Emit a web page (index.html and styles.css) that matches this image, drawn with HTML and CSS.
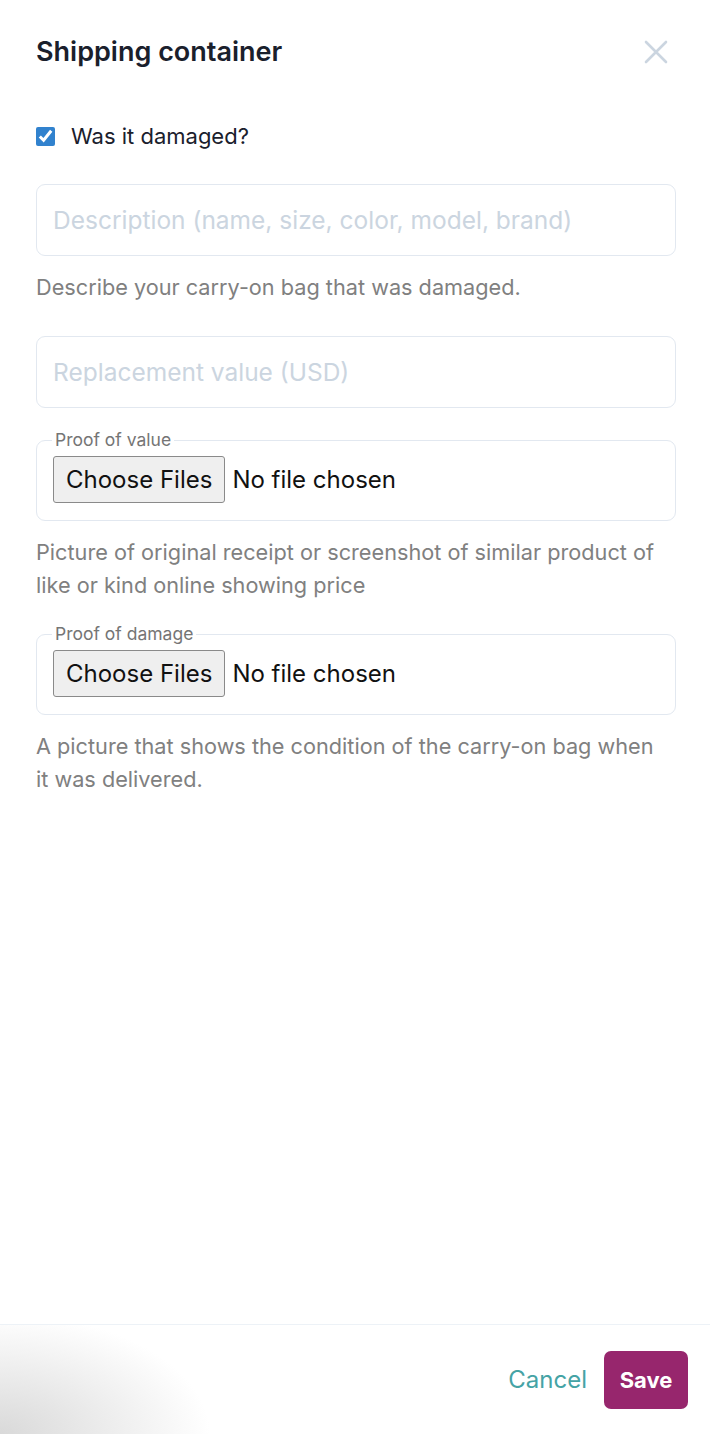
FILE: index.html
```html
<!DOCTYPE html>
<html lang="en">
<head>
    <meta charset="UTF-8">
    <meta name="viewport" content="width=device-width, initial-scale=1.0">
    <title>Shipping container</title>
    <link rel="stylesheet" href="styles.css">
</head>
<body>
    <div class="modal">
        <header class="modal-header">
            <h2 class="modal-title">Shipping container</h2>
            <button class="close-btn" type="button" aria-label="Close">
                <svg width="24" height="24" viewBox="0 0 24 24">
                    <path d="M2 2L22 22M22 2L2 22" stroke="#cbd5e0" stroke-width="2.6" stroke-linecap="round" fill="none"/>
                </svg>
            </button>
        </header>

        <div class="modal-body">
            <label class="check-row">
                <input type="checkbox" class="check-box" checked>
                <span>Was it damaged?</span>
            </label>

            <div class="field first">
                <input class="text-input" type="text" placeholder="Description (name, size, color, model, brand)">
                <p class="help">Describe your carry-on bag that was damaged.</p>
            </div>

            <div class="field">
                <input class="text-input" type="text" placeholder="Replacement value (USD)">
            </div>

            <fieldset class="file-field">
                <legend>Proof of value</legend>
                <div class="file-pick">
                    <span class="file-btn">Choose Files</span>
                    <span class="file-name">No file chosen</span>
                </div>
            </fieldset>
            <p class="help">Picture of original receipt or screenshot of similar product of like or kind online showing price</p>

            <fieldset class="file-field">
                <legend>Proof of damage</legend>
                <div class="file-pick">
                    <span class="file-btn">Choose Files</span>
                    <span class="file-name">No file chosen</span>
                </div>
            </fieldset>
            <p class="help">A picture that shows the condition of the carry-on bag when it was delivered.</p>
        </div>

        <footer class="modal-footer">
            <button class="cancel-btn" type="button">Cancel</button>
            <button class="save-btn" type="button">Save</button>
        </footer>
    </div>
</body>
</html>
```

FILE: styles.css
```css
*{
    margin: 0;
    padding: 0;
    box-sizing: border-box;
}
body{
    font-family: Inter, "Liberation Sans", sans-serif;
    color: #1a202c;
    background: #fff;
}
.modal{
    width: 710px;
    height: 1434px;
    display: flex;
    flex-direction: column;
}
.modal-header{
    display: flex;
    justify-content: space-between;
    align-items: center;
    padding: 36px 42px 0 36px;
}
.modal-title{
    font-size: 27px;
    line-height: 32px;
    font-weight: 600;
    color: #1a202c;
}
.close-btn{
    border: none;
    background: none;
    width: 24px;
    height: 24px;
    display: flex;
}
.modal-body{
    flex: 1;
    padding: 52px 34px 0 36px;
}
.check-row{
    display: flex;
    align-items: center;
    height: 32px;
    font-size: 22px;
    color: #1a202c;
}
.check-box{
    width: 19px;
    height: 19px;
    margin-right: 16px;
    accent-color: #3182ce;
}
.field{
    margin-top: 32px;
}
.field.first{
    margin-top: 32px;
}
.text-input{
    display: block;
    width: 100%;
    height: 72px;
    border: 1px solid #e2e8f0;
    border-radius: 9px;
    padding: 0 16px;
    font-family: inherit;
    font-size: 24.5px;
    color: #1a202c;
    outline: none;
}
.text-input::placeholder{
    color: #cbd5e0;
}
.help{
    margin-top: 15px;
    padding-right: 12px;
    font-size: 21.7px;
    line-height: 33px;
    color: #808080;
}
.file-field{
    margin-top: 22px;
    border: 1px solid #e2e8f0;
    border-radius: 9px;
    padding: 0 16px 17px;
    min-width: 0;
}
.file-field legend{
    padding: 0 3px;
    margin-left: -1px;
    font-size: 17.5px;
    line-height: 20px;
    color: #757575;
}
.file-pick{
    display: flex;
    align-items: center;
    margin-top: 6px;
    font-size: 24px;
    color: #111;
}
.file-btn{
    display: inline-flex;
    align-items: center;
    height: 47px;
    padding: 0 12px;
    background: #efefef;
    border: 1px solid #8a8a8a;
    border-radius: 3px;
}
.file-name{
    margin-left: 7px;
}
.modal-footer{
    height: 110px;
    border-top: 1px solid #edf2f7;
    display: flex;
    justify-content: flex-end;
    align-items: center;
    padding: 0 22px;
    background: radial-gradient(ellipse 210px 120px at 0 100%, #d9d9d9 0%, rgba(255,255,255,0) 100%);
}
.cancel-btn{
    border: none;
    background: none;
    font-family: inherit;
    font-size: 24px;
    color: #45a3a5;
    margin-right: 17px;
}
.save-btn{
    width: 84px;
    height: 58px;
    border: none;
    border-radius: 7px;
    background: #97266d;
    color: #fff;
    font-family: inherit;
    font-size: 22px;
    font-weight: 700;
}
```
